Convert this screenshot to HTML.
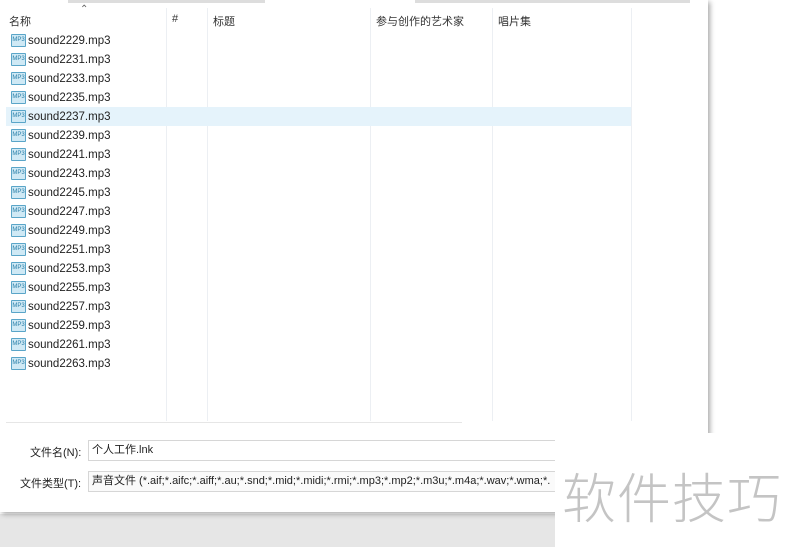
<!DOCTYPE html>
<html><head><meta charset="utf-8"><style>
body{margin:0;width:790px;height:547px;overflow:hidden;background:#fff;position:relative;font-family:"Liberation Sans","Noto Sans CJK SC",sans-serif;font-size:11px;color:#222}
.win{position:absolute;left:0;top:0;width:708px;height:512px;background:#fff;box-shadow:2px 2px 5px rgba(0,0,0,.35)}
.bg{position:absolute;left:0;top:514px;width:790px;height:33px;background:#e6e6e6}
.col{position:absolute;top:8px;height:413px;border-left:1px solid #eceff3}
.hd{position:absolute;top:13px;font-size:11px;color:#333}
.row{position:absolute;left:11px;height:19px;display:flex;align-items:center;font-size:11.5px}
.ic{display:inline-block;width:15px;height:13px;border:1px solid #5aa5c8;background:#cfe9f5;margin-right:2px;font-size:6px;line-height:11px;color:#2a7fa8;text-align:center;box-sizing:border-box;border-radius:1px}
.inp{position:absolute;left:88px;width:470px;height:21px;border:1px solid #d6d6d6;box-sizing:border-box;line-height:19px;padding-left:3px;font-size:11px}
.lab{position:absolute;font-size:11px;color:#222}
.wm{position:absolute;left:555px;top:433px;width:235px;height:114px;background:#fff}
.wmt{position:absolute;left:562px;top:455px;font-size:54px;color:#c4c4c4;font-family:"Noto Sans CJK SC",sans-serif;letter-spacing:1px;font-weight:300}
</style></head><body>
<div class="bg"></div>
<div class="win">
<div style="position:absolute;left:68px;top:0;width:197px;height:3px;background:#ddd"></div>
<div style="position:absolute;left:415px;top:0;width:275px;height:3px;background:#ddd"></div>
<div style="position:absolute;left:80px;top:4px;font-size:10px;color:#666">⌃</div>
<div class="col" style="left:166px"></div><div class="col" style="left:207px"></div><div class="col" style="left:370px"></div><div class="col" style="left:492px"></div><div class="col" style="left:631px"></div>
<div class="hd" style="left:9px">名称</div><div class="hd" style="left:172px">#</div><div class="hd" style="left:213px">标题</div><div class="hd" style="left:376px">参与创作的艺术家</div><div class="hd" style="left:498px">唱片集</div>
<div style="position:absolute;left:6px;top:107px;width:625px;height:19px;background:#e5f3fb"></div>
<div class="row" style="top:31px"><span class="ic">MP3</span>sound2229.mp3</div>
<div class="row" style="top:50px"><span class="ic">MP3</span>sound2231.mp3</div>
<div class="row" style="top:69px"><span class="ic">MP3</span>sound2233.mp3</div>
<div class="row" style="top:88px"><span class="ic">MP3</span>sound2235.mp3</div>
<div class="row" style="top:107px"><span class="ic">MP3</span>sound2237.mp3</div>
<div class="row" style="top:126px"><span class="ic">MP3</span>sound2239.mp3</div>
<div class="row" style="top:145px"><span class="ic">MP3</span>sound2241.mp3</div>
<div class="row" style="top:164px"><span class="ic">MP3</span>sound2243.mp3</div>
<div class="row" style="top:183px"><span class="ic">MP3</span>sound2245.mp3</div>
<div class="row" style="top:202px"><span class="ic">MP3</span>sound2247.mp3</div>
<div class="row" style="top:221px"><span class="ic">MP3</span>sound2249.mp3</div>
<div class="row" style="top:240px"><span class="ic">MP3</span>sound2251.mp3</div>
<div class="row" style="top:259px"><span class="ic">MP3</span>sound2253.mp3</div>
<div class="row" style="top:278px"><span class="ic">MP3</span>sound2255.mp3</div>
<div class="row" style="top:297px"><span class="ic">MP3</span>sound2257.mp3</div>
<div class="row" style="top:316px"><span class="ic">MP3</span>sound2259.mp3</div>
<div class="row" style="top:335px"><span class="ic">MP3</span>sound2261.mp3</div>
<div class="row" style="top:354px"><span class="ic">MP3</span>sound2263.mp3</div>
<div style="position:absolute;left:6px;top:422px;width:456px;height:1px;background:#e6e6e6"></div>
<div class="lab" style="left:30px;top:444px">文件名(N):</div>
<div class="inp" style="top:440px">个人工作.lnk</div>
<div class="lab" style="left:20px;top:475px">文件类型(T):</div>
<div class="inp" style="top:471px;background:#fafafa;white-space:nowrap;overflow:hidden">声音文件 (*.aif;*.aifc;*.aiff;*.au;*.snd;*.mid;*.midi;*.rmi;*.mp3;*.mp2;*.m3u;*.m4a;*.wav;*.wma;*.</div>
</div>
<div class="wm"></div>
<div class="wmt">软件技巧</div>
</body></html>
